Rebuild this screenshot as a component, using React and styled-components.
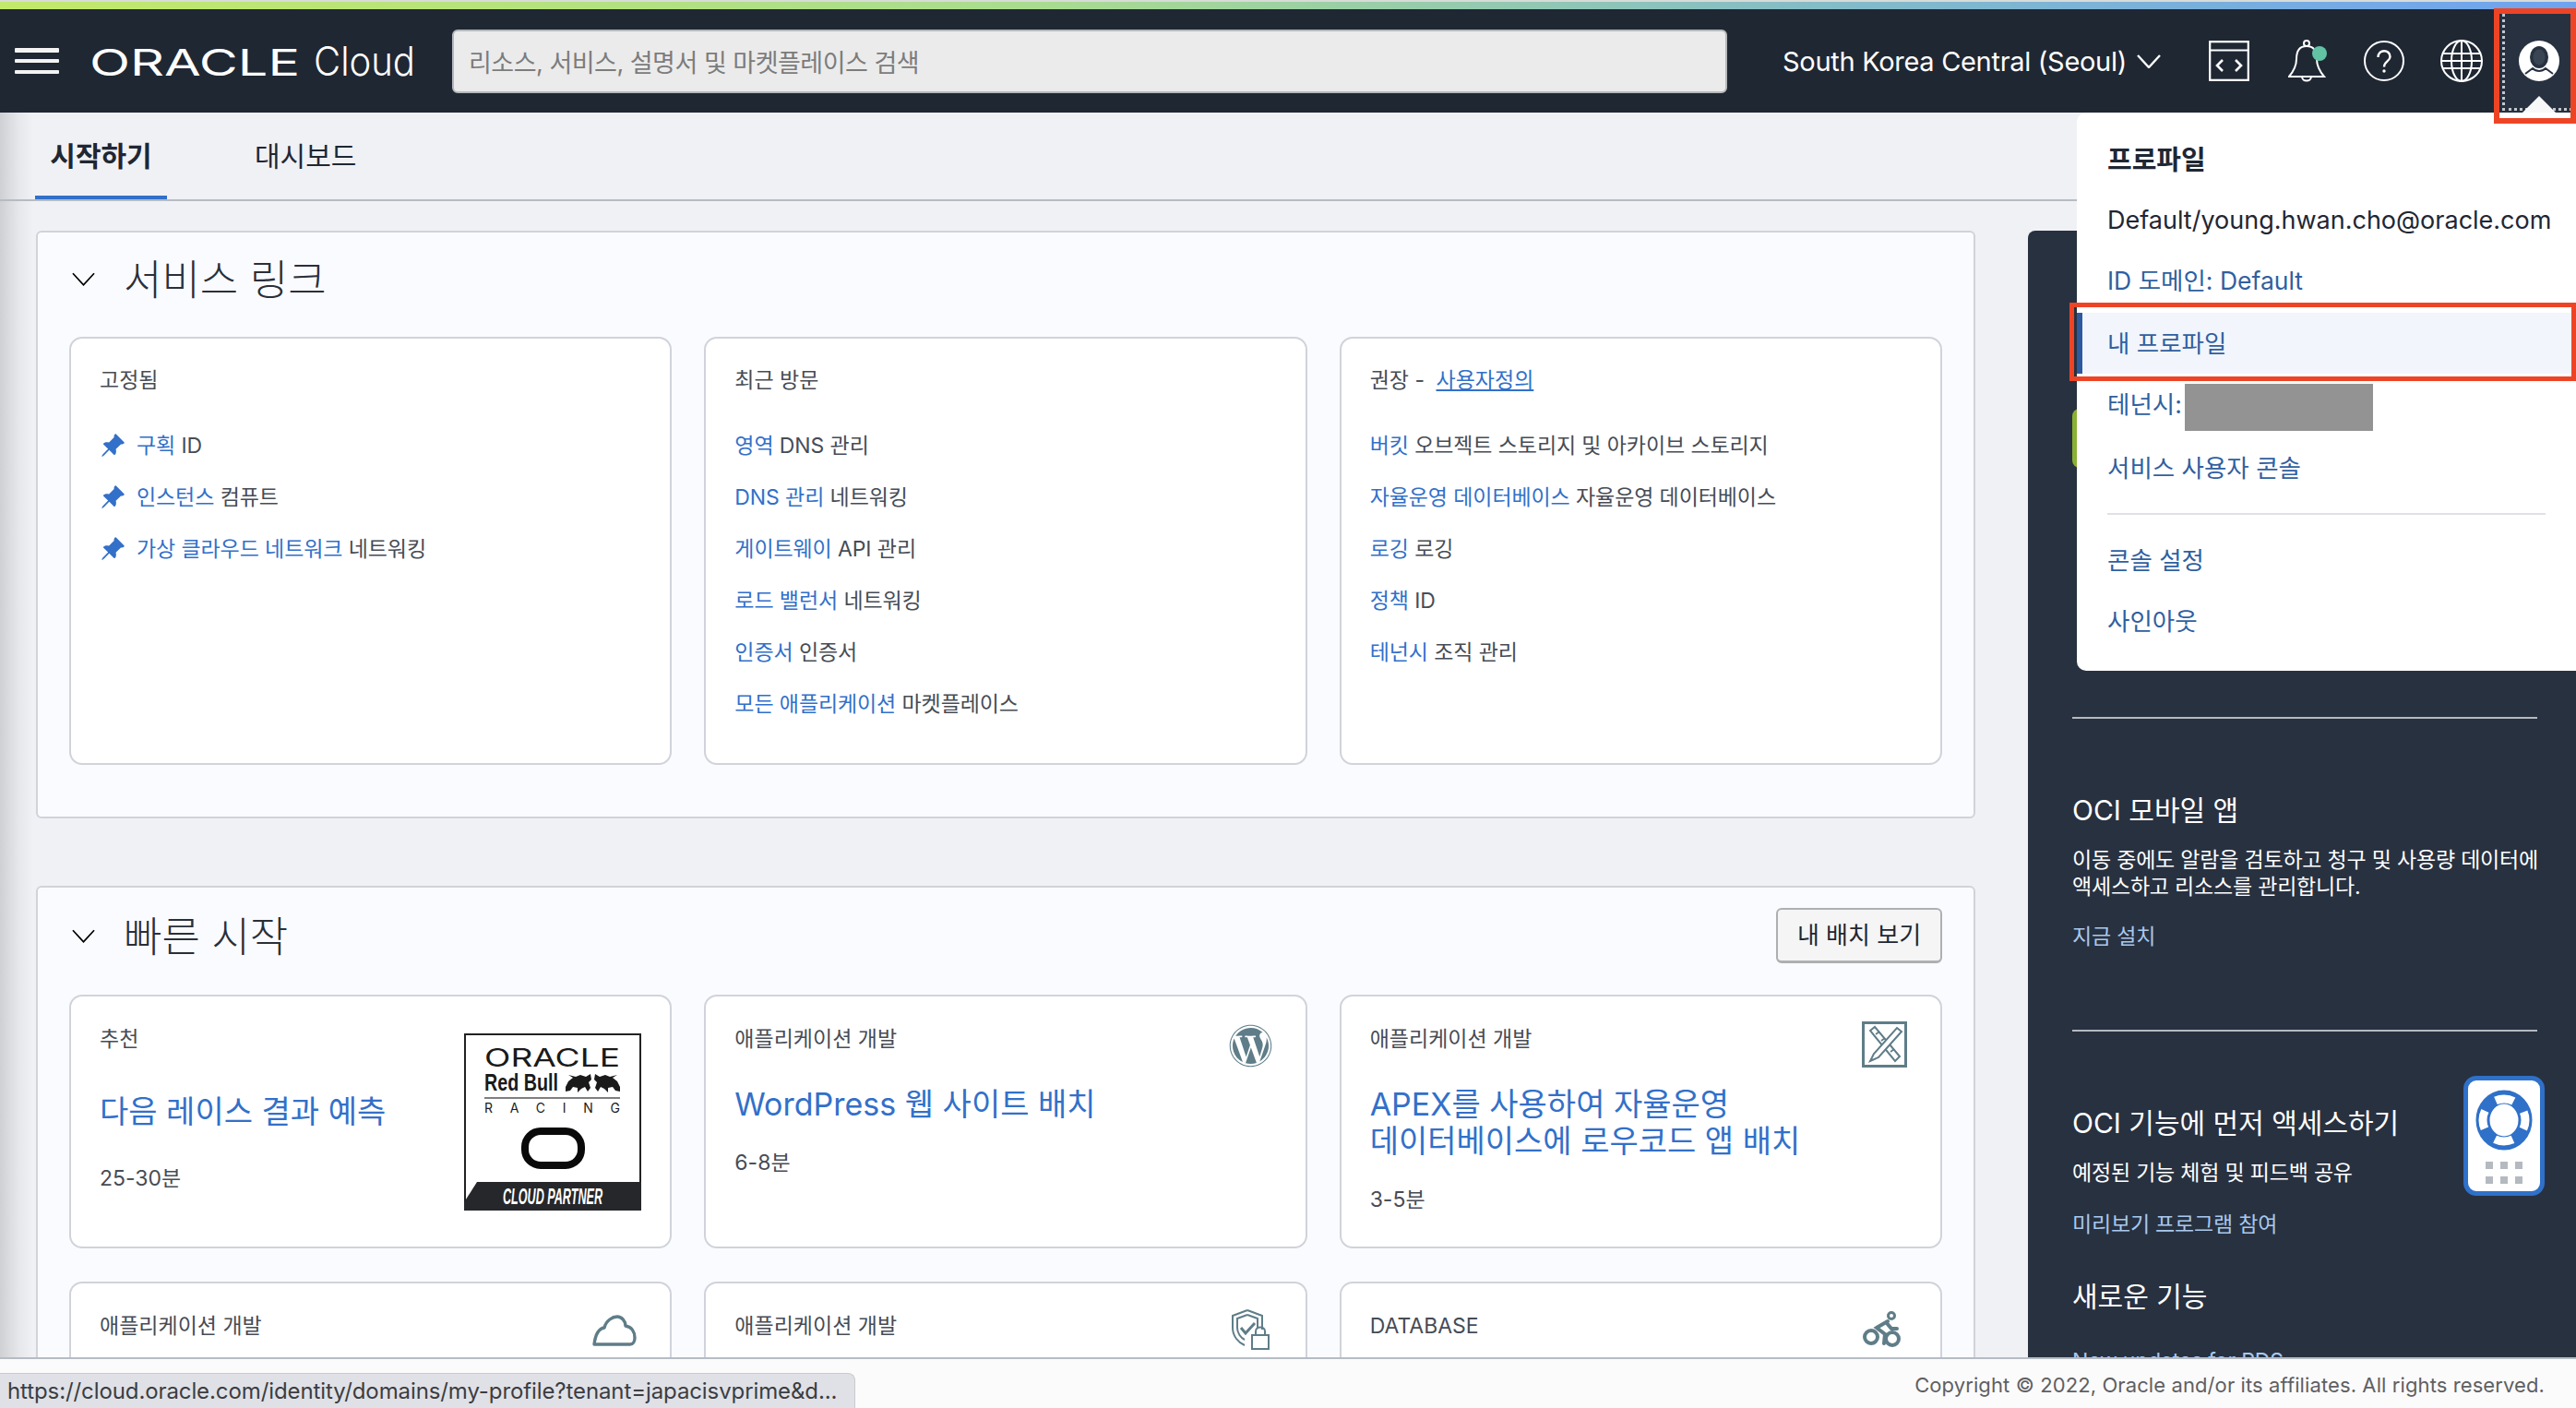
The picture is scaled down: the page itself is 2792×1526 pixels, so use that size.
import React from "react";
import styled, { createGlobalStyle } from "styled-components";
import { BsPinAngleFill } from "react-icons/bs";
import { FaWordpress } from "react-icons/fa";

const SANS = `Inter, "Noto Sans CJK KR", sans-serif`;
const LINK = "#3270c9";
const TEXT = "#474c55";
const ICON = "#5f7d88";

const Global = createGlobalStyle`
  html, body { margin: 0; padding: 0; }
  body { font-family: ${SANS}; background: #f0f1f5; }
  * { box-sizing: border-box; }
`;

const Page = styled.div`
  position: relative; width: 2792px; height: 1526px; overflow: hidden;
  display: flex; flex-direction: column;
  background: linear-gradient(90deg, #cfd0d3 0, #e6e7ea 20px, #f0f1f5 36px);
`;
const TopStrip = styled.div`
  height: 10px; flex: none; border-top: 2px solid #d8dbd8;
  background: linear-gradient(90deg, #c2e96a 0%, #a9dc8f 40%, #84bcc6 70%, #6ea3f0 100%);
`;
const Header = styled.header`
  height: 112px; flex: none; background: #1f2733; display: flex; align-items: center; color: #fff;
`;
const Hamburger = styled.button`
  width: 48px; height: 28px; margin-left: 16px; padding: 0; border: 0; background: none;
  display: flex; flex-direction: column; justify-content: space-between;
  span { display: block; height: 4.5px; background: #f3f3f3; border-radius: 1px; }
`;
const LogoSvg = styled.svg`margin-left: 33px; flex: none; display: block; overflow: visible;`;
const Search = styled.div`
  width: 1382px; height: 69px; margin-left: 39px; flex: none; background: #ebebeb;
  border: 2px solid #b5b8bb; border-radius: 6px; display: flex; align-items: center;
  padding-left: 16px; font-size: 27px; letter-spacing: -0.5px; color: #7c7c7c; white-space: nowrap;
`;
const Region = styled.div`
  margin-left: 60px; display: flex; align-items: center; gap: 11px; font-size: 29px; white-space: nowrap; letter-spacing: -0.3px;
`;
const HeaderIcons = styled.div`
  margin-left: auto; margin-right: -2px; display: flex; align-self: stretch;
`;
const IconSlot = styled.div`
  width: 84px; display: flex; align-items: center; justify-content: center; position: relative;
`;
const ActiveSlot = styled(IconSlot)`
  background: #283140;
  &::before {
    content: ""; position: absolute; inset: 0 0 2px 2px;
    border-left: 3px dotted #c4c8cd; border-bottom: 3px dotted #c4c8cd;
  }
  &::after {
    content: ""; position: absolute; bottom: 0; left: 24px;
    border-left: 18px solid transparent; border-right: 18px solid transparent; border-bottom: 18px solid #f8f8f8;
  }
`;
const ProfileHighlight = styled.div`
  position: absolute; z-index: 5; left: 2703px; top: 9px; width: 89px; height: 125px; border: 6px solid #ee4426;
`;
const MenuHighlight = styled.div`
  position: absolute; z-index: 5; left: 2243px; top: 328px; width: 549px; height: 85px; border: 5px solid #ee4426;
`;

const Tabs = styled.nav`
  height: 96px; flex: none; display: flex; border-bottom: 2px solid #b6bcc4; padding-left: 38px;
`;
const Tab = styled.div`
  height: 94px; display: flex; align-items: center; justify-content: center; font-size: 30px;
  color: #1f2733; font-weight: ${p => (p.$active ? 600 : 400)};
  width: ${p => (p.$active ? "143px" : "auto")};
  margin-left: ${p => (p.$active ? "0" : "95px")};
  border-bottom: 4px solid ${p => (p.$active ? LINK : "transparent")};
`;

const Content = styled.div`
  flex: 1; min-height: 0; overflow: hidden; display: flex; padding: 32px 0 0 39px; gap: 57px;
`;
const MainColumn = styled.main`
  width: 2102px; flex: none; display: flex; flex-direction: column; gap: 73px;
`;
const Section = styled.section`
  flex: none; background: #fafbff; border: 2px solid #d0d3d9; border-radius: 6px; padding: 0 34px 56px;
`;
const SectionHead = styled.div`
  height: ${p => p.$h}px; margin-bottom: ${p => p.$mb}px; display: flex; align-items: center; padding-left: 3px;
`;
const SectionTitle = styled.h2`
  margin: 3px 0 0 31px; font-size: 45px; font-weight: 300; color: #2a2f38; line-height: 1;
`;
const SecondaryButton = styled.button`
  margin-left: auto; width: 180px; height: 60px; background: #f5f5f5; border: 2px solid #adb0b3; border-bottom-width: 3px;
  border-radius: 6px; font: 400 26px ${SANS}; color: #1f2733; padding: 0 0 4px; white-space: nowrap;
`;
const Grid = styled.div`
  display: grid; grid-template-columns: repeat(3, 1fr); gap: ${p => p.$rowGap || 35}px 35px;
`;
const LinkCard = styled.div`
  height: 464px; background: #fff; border: 2px solid #d0d3da; border-radius: 14px; padding: 27px 20px 0 31px;
`;
const CardLabel = styled.div`
  font-size: 23px; line-height: 36px; color: ${TEXT};
  a { color: ${LINK}; text-decoration: underline; margin-left: 6px; }
`;
const LinkList = styled.ul`
  list-style: none; margin: 25px 0 0; padding: 0;
`;
const LinkRow = styled.li`
  height: 56px; line-height: 56px; font-size: 23px; letter-spacing: -0.1px; color: ${TEXT}; display: flex; align-items: center; gap: 12px; white-space: pre;
  svg { color: ${LINK}; flex: none; }
  a { color: ${LINK}; }
`;
const QuickCard = styled.div`
  height: 275px; background: #fff; border: 2px solid #d0d3da; border-radius: 14px; padding: 30px 36px 0 31px;
  display: flex; justify-content: space-between; align-items: flex-start;
`;
const QuickLabel = styled.div`
  font-size: 23px; line-height: 32px; color: ${TEXT};
`;
const QuickTitle = styled.div`
  font-size: 34px; line-height: 40px; color: ${LINK}; white-space: nowrap; margin-top: ${p => (p.$featured ? 43 : 35)}px;
`;
const QuickTime = styled.div`
  font-size: 23px; line-height: 32px; color: ${TEXT}; margin-top: ${p => (p.$featured ? 36 : 27)}px;
`;
const IconBox = styled.div`
  flex: none; display: flex; margin-top: ${p => p.$mt || 0}px; margin-right: ${p => p.$mr || 0}px; color: ${ICON};
`;

const Panel = styled.aside`
  flex: 1; min-width: 0; background: #283140; border-top-left-radius: 8px; color: #fff; padding: 193px 42px 0 48px;
`;
const PanelButton = styled.div`
  width: 200px; height: 64px; border-radius: 8px; background: #8ab034;
`;
const PanelRule = styled.hr`
  margin: ${p => p.$mt}px 0 0; border: 0; height: 2px; background: #b5b9c0;
`;
const PanelHeading = styled.h3`
  margin: ${p => p.$mt}px 0 0; font-size: 30px; font-weight: 400; line-height: 40px; white-space: nowrap;
`;
const PanelText = styled.p`
  margin: ${p => p.$mt}px 0 0; font-size: 23px; letter-spacing: -0.2px; line-height: 29px; white-space: nowrap;
`;
const PanelLink = styled.a`
  display: block; margin-top: ${p => p.$mt}px; font-size: 23px; letter-spacing: -0.2px; line-height: 30px; color: #a9c8ec; white-space: nowrap;
`;
const PromoRow = styled.div`
  display: flex; justify-content: space-between; align-items: flex-start;
`;
const PromoBadge = styled.div`
  width: 88px; height: 130px; margin: 48px -8px 0 0; flex: none; background: #fff; border: 5px solid #2f70c9; border-radius: 14px;
  display: flex; flex-direction: column; align-items: center; padding-top: 10px;
`;
const DotGrid = styled.div`
  display: grid; grid-template-columns: repeat(3, 8px); gap: 8px; margin-top: 12px;
  span { height: 8px; background: #b5b9c0; }
`;

const Footer = styled.footer`
  height: 55px; flex: none; background: #fbfbfc; border-top: 2px solid #b6bcc4; display: flex; align-items: center; justify-content: flex-end;
  padding: 3px 34px 0 0; font-size: 22px; letter-spacing: 0.1px; color: #5f6062; white-space: nowrap;
`;
const StatusBubble = styled.div`
  position: absolute; z-index: 6; left: 0; bottom: 0; width: 927px; height: 38px; background: #e0e1e6; border: 1px solid #c9cacd; border-left: 0; border-bottom: 0;
  border-top-right-radius: 8px; padding-left: 8px; display: flex; align-items: center;
  font-size: 24px; letter-spacing: -0.1px; color: #3b3d42; white-space: nowrap; overflow: hidden;
`;

const Dropdown = styled.div`
  position: absolute; z-index: 4; left: 2251px; top: 122px; width: 541px; height: 605px; background: #fff;
  border-radius: 10px 0 0 10px; display: flex; flex-direction: column;
`;
const MenuTitle = styled.div`
  height: 85px; padding: 12px 0 0 33px; display: flex; align-items: center; font-size: 29px; font-weight: 600; color: #1f2733;
`;
const MenuRow = styled.div`
  height: 66px; flex: none; display: flex; align-items: center; padding: 0 0 ${p => p.$pb || 4}px 33px; font-size: ${p => (p.$plain ? 27 : 26.5)}px; white-space: nowrap;
  color: ${p => (p.$plain ? "#1f2733" : "#30609f")};
  margin-top: ${p => p.$mt || 0}px;
`;
const MenuRowActive = styled(MenuRow)`
  background: #f2f5fb; border-left: 6px solid #2d5a9f; padding-left: 27px;
`;
const Redacted = styled.span`
  width: 204px; height: 51px; background: #939393; margin: 10px 0 0 3px; flex: none;
`;
const MenuRule = styled.hr`
  margin: 16px 33px 16px 33px; height: 2px; border: 0; background: #e0e1e8; flex: none;
`;

const Chevron = ({ w = 25, h = 15, sw = 1.8 }) => (
  <svg width={w} height={h} viewBox="0 0 26 15" fill="none" stroke="currentColor" strokeWidth={sw} style={{ flex: "none" }}>
    <path d="M1 1 L13 14 L25 1" />
  </svg>
);

const Logo = () => (
  <LogoSvg width="354" height="56" viewBox="0 0 354 56">
    <text x="0" y="44" fontFamily="Inter, sans-serif" fontSize="40" fontWeight="400" fill="#fff" textLength="228" lengthAdjust="spacingAndGlyphs">ORACLE</text>
    <text x="243" y="44" fontFamily="Inter, sans-serif" fontSize="43" fontWeight="300" fill="#fff" textLength="110" lengthAdjust="spacingAndGlyphs">Cloud</text>
  </LogoSvg>
);

const CodeIcon = () => (
  <svg width="44" height="44" viewBox="0 0 44 44" fill="none" stroke="#fff" strokeWidth="2.2">
    <rect x="1.2" y="1.2" width="41.6" height="41.6" />
    <path d="M1 10.5 H43" />
    <path d="M15 21 L9 27 L15 33 M29 21 L35 27 L29 33" strokeWidth="2.6" />
  </svg>
);
const BellIcon = () => (
  <svg width="44" height="46" viewBox="0 0 44 46" fill="none" stroke="#fff" strokeWidth="2" style={{ marginLeft: 4 }}>
    <circle cx="20" cy="4" r="3" />
    <path d="M20 7 C12 7 9 13 9 21 C9 29 6 34 1 40 L39 40 C34 34 31 29 31 21 C31 13 28 7 20 7 Z" />
    <path d="M15 40 C15 46 25 46 25 40" />
    <circle cx="34" cy="15" r="8" fill="#62c2a4" stroke="none" />
  </svg>
);
const HelpIcon = () => (
  <svg width="44" height="44" viewBox="0 0 44 44" fill="none" stroke="#fff" strokeWidth="2">
    <circle cx="22" cy="22" r="21" />
    <path d="M15.5 18 C15.5 9 28.5 9 28.5 17.5 C28.5 22.5 22 22.5 22 28.5" strokeWidth="2.4" />
    <circle cx="22" cy="33" r="1.7" fill="#fff" stroke="none" />
  </svg>
);
const GlobeIcon = () => (
  <svg width="46" height="46" viewBox="0 0 46 46" fill="none" stroke="#fff" strokeWidth="2">
    <circle cx="23" cy="23" r="22" />
    <ellipse cx="23" cy="23" rx="11" ry="22" />
    <path d="M23 1 V45 M2.5 15 H43.5 M1 23 H45 M2.5 31 H43.5" />
  </svg>
);
const UserIcon = () => (
  <svg width="44" height="44" viewBox="0 0 44 44">
    <circle cx="22" cy="22" r="22" fill="#fff" />
    <ellipse cx="22" cy="18" rx="10" ry="12" fill="#283140" />
    <ellipse cx="22" cy="18" rx="6.5" ry="8.5" fill="#3a4554" />
    <path d="M7 36 L15 30 C19 34 25 34 29 30 L37 36" fill="none" stroke="#283140" strokeWidth="2" />
  </svg>
);

const CloudIcon = () => (
  <svg width="48" height="34" viewBox="0 0 48 34" fill="none" stroke={ICON} strokeWidth="3.4" strokeLinejoin="round">
    <path d="M2 32 C3 24 6 15 13 14 C15 6 22 2 27 2 C32 2 36 7 36 12 C43 13 46 19 46 25 C46 29 44 32 41 32 Z" />
  </svg>
);
const ShieldIcon = () => (
  <svg width="42" height="44" viewBox="0 0 42 44" fill="none" stroke={ICON} strokeWidth="2">
    <path d="M18 1 L34 7 V22 M18 1 L2 7 V20 C2 29 8 36 15 39" />
    <path d="M18 6 L29 10 V20 M18 6 L7 10 V20 C7 26 11 31 15 33" />
    <path d="M11 20 L16 26 L26 15" strokeWidth="3" />
    <rect x="23" y="28" width="18" height="15" fill="#fff" />
    <path d="M27 28 V24 C27 18 37 18 37 24 V28" />
  </svg>
);
const RulerPencilIcon = () => (
  <svg width="49" height="50" viewBox="0 0 49 50" fill="none" stroke={ICON}>
    <rect x="1.5" y="1.5" width="46" height="47" strokeWidth="3" />
    <path d="M9 10 L14 6 L41 38 L36 43 Z" strokeWidth="2" />
    <path d="M38 7 L43 11 L18 39 L9 43 L13 35 Z" strokeWidth="2" fill="#fff" />
    <path d="M15 14 L19 11 M21 21 L25 18 M31 33 L35 30" strokeWidth="1.6" />
  </svg>
);
const BikeIcon = () => (
  <svg width="41" height="40" viewBox="0 0 41 40" fill="none" stroke={ICON} strokeWidth="4">
    <circle cx="31" cy="6" r="3.5" strokeWidth="3" />
    <circle cx="9" cy="29" r="7" />
    <circle cx="32" cy="31" r="7" />
    <path d="M27 12 L15 19 L24 26 L23 36 M26 14 L31 20 L37 20" strokeLinecap="round" />
  </svg>
);

const BULL = "M0 14 L3 8 L8 4 L3 1 L11 3 L16 1 L22 3 L27 0 L28 6 L25 9 L27 15 L24 19 L21 14 L17 16 L13 20 L13 15 L8 14 L5 18 L0 19 Z";
const BadgeSvg = styled.svg`display: block; overflow: visible;`;
const PartnerBadge = () => (
  <BadgeSvg width="192" height="192" viewBox="0 0 192 192">
    <rect x="1" y="1" width="190" height="190" fill="#fff" stroke="#222" strokeWidth="2" />
    <text x="22" y="36" fontFamily="Inter, sans-serif" fontSize="27" fontWeight="400" fill="#1a1a1a" textLength="147" lengthAdjust="spacingAndGlyphs">ORACLE</text>
    <text x="22" y="62" fontFamily="'Liberation Sans', sans-serif" fontSize="25" fontWeight="700" fill="#1a1a1a" textLength="80" lengthAdjust="spacingAndGlyphs">Red Bull</text>
    <path d={BULL} fill="#1a1a1a" transform="translate(110 44)" />
    <path d={BULL} fill="#1a1a1a" transform="translate(169 44) scale(-1 1)" />
    <path d="M22 70 H169" stroke="#555" strokeWidth="1.5" />
    <text x="22" y="86" fontFamily="Inter, sans-serif" fontSize="14" fill="#1a1a1a" textLength="147">RACING</text>
    <rect x="66" y="106" width="61" height="37" rx="17" fill="none" stroke="#0a0a0a" strokeWidth="8" />
    <path d="M0 191 V183 L14 161 H192 V192 H0 Z" fill="#26272a" />
    <text x="96" y="185" textAnchor="middle" fontFamily="'Liberation Sans', sans-serif" fontSize="23" fontWeight="700" fontStyle="italic" fill="#fff" textLength="108" lengthAdjust="spacingAndGlyphs">CLOUD PARTNER</text>
  </BadgeSvg>
);
const LifeBuoy = () => (
  <svg width="62" height="66" viewBox="0 0 62 66" fill="none">
    <ellipse cx="31" cy="33" rx="23" ry="25" stroke="#2f70c9" strokeWidth="15" />
    <circle cx="31" cy="33" r="23" stroke="#fff" strokeWidth="9" strokeDasharray="20 16.13" strokeDashoffset="10" />
  </svg>
);

const Item = ({ pin, link, rest }) => (
  <LinkRow>
    {pin && <BsPinAngleFill size={28} />}
    <span><a>{link}</a>{" "}{rest}</span>
  </LinkRow>
);

const pinned = [["구획", "ID"], ["인스턴스", "컴퓨트"], ["가상 클라우드 네트워크", "네트워킹"]];
const recent = [["영역", "DNS 관리"], ["DNS 관리", "네트워킹"], ["게이트웨이", "API 관리"], ["로드 밸런서", "네트워킹"], ["인증서", "인증서"], ["모든 애플리케이션", "마켓플레이스"]];
const suggested = [["버킷", "오브젝트 스토리지 및 아카이브 스토리지"], ["자율운영 데이터베이스", "자율운영 데이터베이스"], ["로깅", "로깅"], ["정책", "ID"], ["테넌시", "조직 관리"]];

export default function App() {
  return (
    <Page>
      <Global />
      <TopStrip />
      <Header>
        <Hamburger aria-label="menu"><span /><span /><span /></Hamburger>
        <Logo />
        <Search>리소스, 서비스, 설명서 및 마켓플레이스 검색</Search>
        <Region>South Korea Central (Seoul)<Chevron w={26} sw={2.4} /></Region>
        <HeaderIcons>
          <IconSlot><CodeIcon /></IconSlot>
          <IconSlot><BellIcon /></IconSlot>
          <IconSlot><HelpIcon /></IconSlot>
          <IconSlot><GlobeIcon /></IconSlot>
          <ActiveSlot><UserIcon /></ActiveSlot>
        </HeaderIcons>
      </Header>
      <Tabs>
        <Tab $active>시작하기</Tab>
        <Tab>대시보드</Tab>
      </Tabs>
      <Content>
        <MainColumn>
          <Section>
            <SectionHead $h={100} $mb={13}>
              <Chevron />
              <SectionTitle>서비스 링크</SectionTitle>
            </SectionHead>
            <Grid>
              <LinkCard>
                <CardLabel>고정됨</CardLabel>
                <LinkList>{pinned.map(([a, b]) => <Item key={a} pin link={a} rest={b} />)}</LinkList>
              </LinkCard>
              <LinkCard>
                <CardLabel>최근 방문</CardLabel>
                <LinkList>{recent.map(([a, b]) => <Item key={a} link={a} rest={b} />)}</LinkList>
              </LinkCard>
              <LinkCard>
                <CardLabel>권장 - <a>사용자정의</a></CardLabel>
                <LinkList>{suggested.map(([a, b]) => <Item key={a} link={a} rest={b} />)}</LinkList>
              </LinkCard>
            </Grid>
          </Section>
          <Section>
            <SectionHead $h={104} $mb={12}>
              <Chevron />
              <SectionTitle>빠른 시작</SectionTitle>
              <SecondaryButton>내 배치 보기</SecondaryButton>
            </SectionHead>
            <Grid $rowGap={36}>
              <QuickCard>
                <div>
                  <QuickLabel>추천</QuickLabel>
                  <QuickTitle $featured>다음 레이스 결과 예측</QuickTitle>
                  <QuickTime $featured>25-30분</QuickTime>
                </div>
                <IconBox $mt={10} $mr={-5}><PartnerBadge /></IconBox>
              </QuickCard>
              <QuickCard>
                <div>
                  <QuickLabel>애플리케이션 개발</QuickLabel>
                  <QuickTitle>WordPress 웹 사이트 배치</QuickTitle>
                  <QuickTime>6-8분</QuickTime>
                </div>
                <IconBox><FaWordpress size={47} /></IconBox>
              </QuickCard>
              <QuickCard>
                <div>
                  <QuickLabel>애플리케이션 개발</QuickLabel>
                  <QuickTitle>APEX를 사용하여 자율운영<br />데이터베이스에 로우코드 앱 배치</QuickTitle>
                  <QuickTime>3-5분</QuickTime>
                </div>
                <IconBox $mt={-3}><RulerPencilIcon /></IconBox>
              </QuickCard>
              <QuickCard>
                <QuickLabel>애플리케이션 개발</QuickLabel>
                <IconBox $mt={4}><CloudIcon /></IconBox>
              </QuickCard>
              <QuickCard>
                <QuickLabel>애플리케이션 개발</QuickLabel>
                <IconBox $mt={-2} $mr={3}><ShieldIcon /></IconBox>
              </QuickCard>
              <QuickCard>
                <QuickLabel>DATABASE</QuickLabel>
                <IconBox $mt={-1} $mr={7}><BikeIcon /></IconBox>
              </QuickCard>
            </Grid>
          </Section>
        </MainColumn>
        <Panel>
          <PanelButton />
          <PanelRule $mt={270} />
          <PanelHeading $mt={79}>OCI 모바일 앱</PanelHeading>
          <PanelText $mt={20}>이동 중에도 알람을 검토하고 청구 및 사용량 데이터에<br />액세스하고 리소스를 관리합니다.</PanelText>
          <PanelLink $mt={24}>지금 설치</PanelLink>
          <PanelRule $mt={86} />
          <PromoRow>
            <div>
              <PanelHeading $mt={79}>OCI 기능에 먼저 액세스하기</PanelHeading>
              <PanelText $mt={20}>예정된 기능 체험 및 피드백 공유</PanelText>
              <PanelLink $mt={26}>미리보기 프로그램 참여</PanelLink>
            </div>
            <PromoBadge>
              <LifeBuoy />
              <DotGrid><span /><span /><span /><span /><span /><span /></DotGrid>
            </PromoBadge>
          </PromoRow>
          <PanelHeading $mt={43}>새로운 기능</PanelHeading>
          <PanelLink $mt={35}>New updates for RDS</PanelLink>
        </Panel>
      </Content>
      <Footer>Copyright © 2022, Oracle and/or its affiliates. All rights reserved.</Footer>
      <StatusBubble>https://cloud.oracle.com/identity/domains/my-profile?tenant=japacisvprime&amp;d...</StatusBubble>
      <Dropdown>
        <MenuTitle>프로파일</MenuTitle>
        <MenuRow $plain>Default/young.hwan.cho@oracle.com</MenuRow>
        <MenuRow $pb={7}>ID 도메인: Default</MenuRow>
        <MenuRowActive>내 프로파일</MenuRowActive>
        <MenuRow>테넌시:<Redacted /></MenuRow>
        <MenuRow $mt={3}>서비스 사용자 콘솔</MenuRow>
        <MenuRule />
        <MenuRow>콘솔 설정</MenuRow>
        <MenuRow>사인아웃</MenuRow>
      </Dropdown>
      <ProfileHighlight />
      <MenuHighlight />
    </Page>
  );
}
